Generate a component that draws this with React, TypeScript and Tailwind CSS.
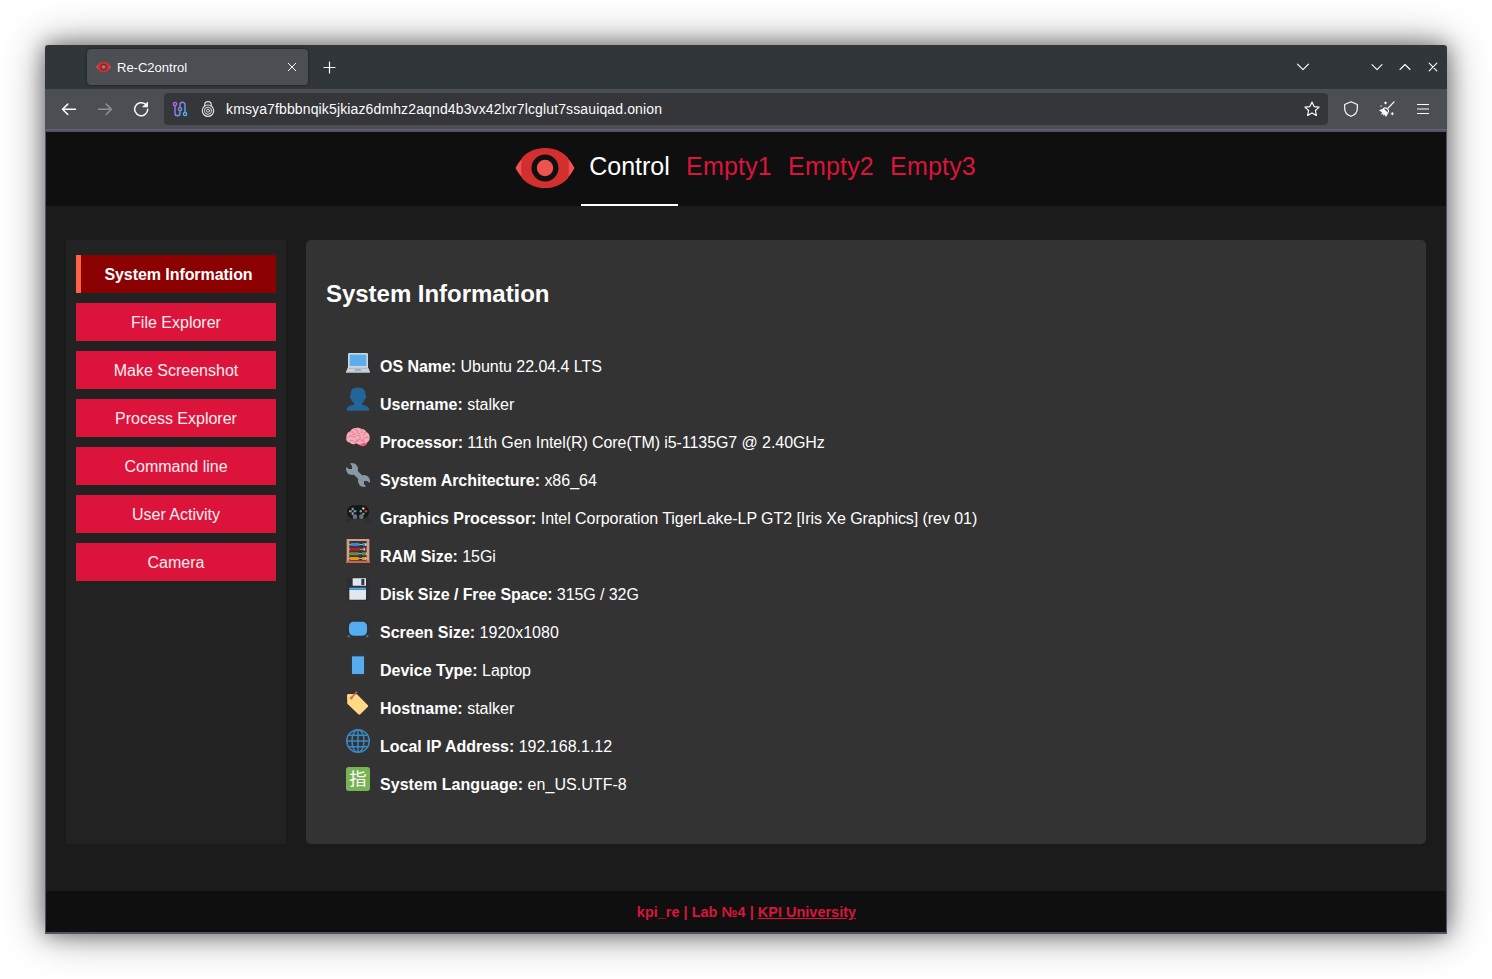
import React from "react";

type IconProps = { children: React.ReactNode; className?: string; size?: number };

function Line({ children, className = "", size = 16 }: IconProps) {
  return (
    <svg
      width={size}
      height={size}
      viewBox={`0 0 ${size} ${size}`}
      fill="none"
      stroke="currentColor"
      strokeWidth="1.2"
      strokeLinecap="round"
      strokeLinejoin="round"
      className={`shrink-0 ${className}`}
    >
      {children}
    </svg>
  );
}

function Eye({ width, height, ring = "#101010" }: { width: number; height: number; ring?: string }) {
  return (
    <svg width={width} height={height} viewBox="0 0 60 40" className="shrink-0">
      <path fill="#ef5350" d="M.5 20C7 7.500 17 1 30 1s23 6.500 29.500 19C53 32.500 43 39 30 39S7 32.500.5 20Z" />
      <path fill="#d32f2f" d="M7 9.800C13 3.500 20 0 30 0s17 3.500 23 9.800c1.300 6.500 1.300 13.900 0 20.400C47 36.500 40 40 30 40S13 36.500 7 30.200c-1.300-6.500-1.300-13.900 0-20.400Z" />
      <circle cx="30" cy="20" r="13.500" fill={ring} />
      <circle cx="30" cy="20" r="8.200" fill="#ef5350" />
    </svg>
  );
}

const glyphs: Record<string, React.ReactNode> = {
  laptop: (
    <>
      <path fill="#ccd6dd" d="M5 6h26a2 2 0 0 1 2 2v19.500l3 6.500a1.500 1.500 0 0 1-1.500 2h-33A1.500 1.500 0 0 1 0 34l3-6.500V8a2 2 0 0 1 2-2Z" />
      <path fill="#9aaab4" d="M0 34h36a1.500 1.500 0 0 1-1.500 2h-33A1.500 1.500 0 0 1 0 34Z" />
      <path fill="#5dadec" d="M5.500 8.500h25v17h-25z" />
      <path fill="#aebbc1" d="M4.500 28h27l1.200 2.500H3.300z" />
      <path fill="#9aaab4" d="M14 30.500h8l1 2.500H13z" />
    </>
  ),
  user: (
    <path fill="#226699" d="M24 26.800v-2.600c2.200-1.600 4-4 4.700-6.800.8 0 1.700-1.300 1.700-3 0-1.500-.5-2.600-1.300-2.900C29.700 5 25.800.8 18 .8S6.300 5 6.900 11.500c-.8.300-1.300 1.400-1.300 2.900 0 1.700.9 3 1.700 3 .7 2.800 2.500 5.200 4.700 6.800v2.600C5 28 1 30 1 35.500h34c0-5.500-4-7.500-11-8.700Z" />
  ),
  brain: (
    <g transform="translate(0 1.500)">
      <path fill="#ea596e" d="M18 23c5-2 11-2 14 2-1 4-5 6-9 5-3 0-5-3-5-7Z" />
      <path fill="#f4abba" d="M35.500 17c0-4-2-7-5-8-1-3-4-5-8-5-2-1-5-2-8-1-4 0-7 2-8 5-4 1-6 5-6 9-1 5 2 8 6 8 2 3 6 3 9 1 3 3 8 2 10-1 3 1 7 1 8-2 2-1 2-4 2-6Z" />
      <g fill="none" stroke="#dd6f86" strokeWidth="1.200" strokeLinecap="round">
        <path d="M7 9c2-1 4 0 5 2M13 5c3 0 4 2 4 4s2 3 4 2M22 5c3 1 3 3 2 5M30 10c-3 0-4 2-4 4M3 17c2-3 5-3 7-1s4 1 5-1M18 14c3 0 4 2 3 5s-4 3-6 2M33 17c-2-1-5 0-6 2s-3 3-5 2M6 22c2-1 4-1 5 1M13 25c1-2 3-3 5-2M28 23c-1-1-3-1-4 0M10 13c2-1 4-1 5 0" />
      </g>
    </g>
  ),
  wrench: (
    <>
      <path stroke="#8899a6" strokeWidth="8" d="m10 10 16 16" />
      <circle cx="9" cy="9" r="9" fill="#8899a6" />
      <circle cx="27" cy="27" r="9" fill="#8899a6" />
      <path fill="#333" d="M-2-2h7.500v2L9 4.500V9H4.500L0 5.500h-2zM38 38h-7.500v-2L27 31.500V27h4.500l4.500 3.500h2z" />
    </>
  ),
  gamepad: (
    <g transform="translate(0 5.500)">
      <path fill="#292f33" d="M4 15 0 25c0 2 2 3 4 1l8-4h12l8 4c2 2 4 1 4-1l-4-10Z" />
      <rect x="1.500" y="1" width="33" height="19.500" rx="9.500" fill="#141719" />
      <path fill="#8899a6" d="M8.500 4.500h3v4h-3zM8.500 11.500h3v4h-3zM4.500 8.500h4v3h-4zM11.500 8.500h4v3h-4z" />
      <circle cx="13.500" cy="18" r="3.500" fill="#66757f" />
      <circle cx="23" cy="18" r="3.500" fill="#66757f" />
      <circle cx="26" cy="5.800" r="1.800" fill="#ffcc4d" />
      <circle cx="22.200" cy="9.800" r="1.800" fill="#55acee" />
      <circle cx="29.800" cy="9.800" r="1.800" fill="#dd2e44" />
      <circle cx="26" cy="13.800" r="1.800" fill="#77b255" />
    </g>
  ),
  abacus: (
    <>
      <path fill="#31373d" d="M3 3h30v29H3z" />
      <path fill="#a9b5bd" d="M4 7.500h28v1.500H4zM4 14.500h28V16H4zM4 21.500h28V23H4zM4 28.500h28V30H4z" />
      <path fill="#3b88c3" d="M7 6h13v4.500H7zM25 6h4v4.500h-4z" />
      <path fill="#be1931" d="M6 13h15v4.500H6zM28 13h3v4.500h-3z" />
      <path fill="#5c913b" d="M6 20h13v4.500H6zM24 20h6v4.500h-6z" />
      <path fill="#f4900c" d="M6 27h13v4.500H6zM24 27h5v4.500h-5z" />
      <path fill="#e6e7e8" d="M29 6h1.500v4.500H29zM26.500 13H28v4.500h-1.500zM30 20h1v4.500h-1zM29 27h1.500v4.500H29z" />
      <path fill="#d99e82" d="M1 0h4v35H1zM31 0h4v35h-4zM1 0h34v3H1z" />
      <path fill="#c1694f" d="M0 32.500h36V36H0z" />
    </>
  ),
  floppy: (
    <>
      <path fill="#292f33" d="M4 1h25l6 5v28a2 2 0 0 1-2 2H4a2 2 0 0 1-2-2V3a2 2 0 0 1 2-2Z" />
      <path fill="#e1e8ed" d="M10 2h20v11H10zM5 19h25v14a1 1 0 0 1-1 1H6a1 1 0 0 1-1-1z" />
      <path fill="#31373d" d="M23 3h4.500v9H23z" />
      <path fill="#55acee" d="M5 16h25v3H5z" />
    </>
  ),
  screen: (
    <g transform="translate(0 1)">
      <path fill="none" stroke="#292f33" strokeWidth="1.200" d="m11 2 7 6 7-6" />
      <rect x="1" y="7" width="34" height="25" rx="4" fill="#2d3237" />
      <rect x="4.500" y="9" width="27" height="21" rx="7" fill="#55acee" />
      <path fill="#66757f" d="M2.500 29.500h3v3h-3zM30.500 29.500h3v3h-3z" />
    </g>
  ),
  phone: (
    <>
      <rect x="7" y="0" width="22" height="36" rx="3" fill="#31373d" />
      <path fill="#55acee" d="M9 5h18v26.500H9z" />
    </>
  ),
  tag: (
    <>
      <path fill="#ffd983" d="M1.500 7c0-1.500 1-2.500 2.500-2.500L16.500 5l16 16c1 1 1 2 0 3L21.500 35c-1 1-2 1-3 0L2 19Z" />
      <circle cx="8" cy="10.500" r="2.500" fill="#d99e82" />
      <path stroke="#c1694f" strokeWidth="2.200" strokeLinecap="round" fill="none" d="M7.500 11 16 1.500" />
    </>
  ),
  globe: (
    <g fill="none" stroke="#3b88c3" strokeWidth="2.200">
      <circle cx="18" cy="18" r="16.900" />
      <ellipse cx="18" cy="18" rx="9" ry="17" />
      <path d="M18 1v34M1 18h34M4 9.500h28M4 26.500h28" />
    </g>
  ),
  language: (
    <>
      <rect width="36" height="36" rx="4" fill="#77b255" />
      <text x="18" y="27.500" textAnchor="middle" fontSize="26" fill="#fff" fontFamily="Noto Sans CJK JP, sans-serif">指</text>
    </>
  ),
};

const facts = [
  { icon: "laptop", label: "OS Name:", value: "Ubuntu 22.04.4 LTS", tracking: "tracking-[-0.04px]" },
  { icon: "user", label: "Username:", value: "stalker", tracking: "" },
  { icon: "brain", label: "Processor:", value: "11th Gen Intel(R) Core(TM) i5-1135G7 @ 2.40GHz", tracking: "tracking-[-0.07px]" },
  { icon: "wrench", label: "System Architecture:", value: "x86_64", tracking: "tracking-[-0.02px]" },
  { icon: "gamepad", label: "Graphics Processor:", value: "Intel Corporation TigerLake-LP GT2 [Iris Xe Graphics] (rev 01)", tracking: "tracking-[-0.055px]" },
  { icon: "abacus", label: "RAM Size:", value: "15Gi", tracking: "tracking-[-0.05px]" },
  { icon: "floppy", label: "Disk Size / Free Space:", value: "315G / 32G", tracking: "tracking-[-0.08px]" },
  { icon: "screen", label: "Screen Size:", value: "1920x1080", tracking: "" },
  { icon: "phone", label: "Device Type:", value: "Laptop", tracking: "" },
  { icon: "tag", label: "Hostname:", value: "stalker", tracking: "" },
  { icon: "globe", label: "Local IP Address:", value: "192.168.1.12", tracking: "" },
  { icon: "language", label: "System Language:", value: "en_US.UTF-8", tracking: "tracking-[0.05px]" },
];

const menu = ["File Explorer", "Make Screenshot", "Process Explorer", "Command line", "User Activity", "Camera"];

function TitleBar() {
  return (
    <div className="flex h-11 items-center bg-[#31363b] pl-[42px] text-[#fcfcfc]">
      <div className="flex h-9 w-[221px] items-center rounded bg-[#4b4e53] pr-[10px] pl-[9px] shadow-[0_0_3px_rgba(0,0,0,0.5)]">
        <Eye width={15} height={10} ring="#4a3a3f" />
        <span className="ml-[6px] grow pt-px text-[13px]">Re-C2ontrol</span>
        <Line size={12}>
          <path strokeWidth="1" d="m2.200 2.200 7.600 7.600m0-7.600-7.600 7.600" />
        </Line>
      </div>
      <Line className="ml-[13px]">
        <path d="M8.500 3v11M3 8.500h11" />
      </Line>
      <div className="ml-auto flex items-center pr-[6px]">
        <Line className="mr-[58px]">
          <path d="m2.500 5.200 5.500 5.500 5.500-5.500" />
        </Line>
        <Line className="mr-3">
          <path strokeWidth="1.100" d="m3 5.700 5 5 5-5" />
        </Line>
        <Line className="mr-3">
          <path strokeWidth="1.100" d="m3 10.500 5-5 5 5" />
        </Line>
        <Line>
          <path strokeWidth="1.100" d="m4.200 4.200 7.600 7.600m0-7.600-7.600 7.600" />
        </Line>
      </div>
    </div>
  );
}

function AddressBar() {
  return (
    <div className="flex h-10 items-center bg-[#4b4e53] pr-4 pl-4 text-[#fcfcfc]">
      <Line>
        <path strokeWidth="1.500" d="M14.500 8.300h-13M6.800 3.100 1.500 8.300l5.300 5.200" />
      </Line>
      <Line className="ml-5 text-[#8d9093]">
        <path strokeWidth="1.500" d="M1.500 8.300h13M9.200 3.100l5.300 5.200-5.300 5.200" />
      </Line>
      <Line className="ml-5">
        <path strokeWidth="1.500" d="M14.700 8.300a6.500 6.500 0 1 1-2.200-5" />
        <path fill="currentColor" strokeWidth="1" d="M14.500 1.500v4.300h-4.300z" />
      </Line>
      <div className="ml-[15px] flex h-8 w-[1164px] items-center rounded bg-[#35363a] pr-2 pl-2">
        <svg width="16" height="16" viewBox="0 0 16 16" fill="none" strokeWidth="1.400" className="shrink-0">
          <defs>
            <linearGradient id="circuit" x1="0" y1="2" x2="15" y2="13" gradientUnits="userSpaceOnUse">
              <stop offset="0" stopColor="#cf62e6" />
              <stop offset="0.5" stopColor="#7d84f2" />
              <stop offset="1" stopColor="#3fc4f2" />
            </linearGradient>
          </defs>
          <g stroke="url(#circuit)">
            <circle cx="3" cy="3" r="1.600" />
            <circle cx="8" cy="8" r="1.600" />
            <circle cx="13" cy="13" r="1.600" />
            <path d="M3 4.600V12.200a2.500 2.500 0 0 0 5 0V9.600M8 6.400V3.800a2.500 2.500 0 0 1 5 0v7.600" />
          </g>
        </svg>
        <Line className="ml-3 text-[#dedfe0]">
          <circle cx="8" cy="9.700" r="5.700" />
          <circle cx="8" cy="9.700" r="3.600" strokeWidth="1" />
          <circle cx="8" cy="9.700" r="1.500" strokeWidth="1" />
          <path d="M4.700 5V3.900a3.300 3.300 0 0 1 6.600 0V5" />
        </Line>
        <span className="ml-[10px] grow text-[14px] tracking-[0.13px]">kmsya7fbbbnqik5jkiaz6dmhz2aqnd4b3vx42lxr7lcglut7ssauiqad.onion</span>
        <Line>
          <path d="m8 1 2.100 4.600 5 .5-3.700 3.400 1 5L8 12l-4.400 2.500 1-5L.9 6.100l5-.5z" />
        </Line>
      </div>
      <Line className="ml-[15px]">
        <path d="M8 .8 14.300 3.500v4.200c0 3.800-2.600 6.300-6.300 7.600-3.700-1.300-6.300-3.800-6.300-7.600V3.500z" />
      </Line>
      <Line className="ml-5">
        <path d="M15 .8 9.200 7" />
        <path d="M4.500 7.500c2-1.500 5.500.500 5 3.500" />
        <path fill="currentColor" strokeWidth="0.600" d="M.8 9.300 4.500 7.800 9 12l-2 3.500-1.500-2-1 .7.100-1.700-2.100.7.800-1.800z" />
        <path strokeWidth="1.100" d="M6.500 1v1.800M5.600 1.900h1.800M1.800 5h.6M13.300 11.600v2.200M12.200 12.700h2.200" />
      </Line>
      <Line className="ml-5">
        <path strokeWidth="1.200" strokeLinecap="butt" d="M2 3.500h12M2 8h12M2 12.500h12" />
      </Line>
    </div>
  );
}

export default function App() {
  return (
    <div className="h-[979px] w-[1492px] overflow-hidden bg-white p-[45px] font-['Liberation_Sans',Arial,sans-serif]">
      <div className="flex h-[889px] w-[1402px] flex-col rounded-t-[3px] shadow-[0_0_20px_rgba(0,0,0,0.4),0_0_42px_rgba(0,0,0,0.45)]">
        <div className="overflow-hidden rounded-t-[3px]">
          <TitleBar />
          <AddressBar />
          <div className="h-px bg-[#62646c]" />
          <div className="h-[2px] bg-[#55516a]" />
        </div>
        <div className="flex grow flex-col border-x border-b-2 border-[#55516a] border-t-0 bg-[#1b1b1b] text-white">
          <header className="flex h-[74px] bg-[#0f0f0f] pl-[469px] text-[25px]">
            <div className="pt-4">
              <Eye width={60} height={40} />
            </div>
            <nav className="ml-[6px] flex leading-[68px]">
              <a className="h-[74px] w-[97px] border-b-2 border-white text-center">Control</a>
              {["Empty1", "Empty2", "Empty3"].map((name) => (
                <a key={name} className="w-[102px] text-center tracking-[0.2px] text-[#dc143c]">{name}</a>
              ))}
            </nav>
          </header>
          <main className="flex grow gap-5 px-5 pt-[34px] pb-[47px]">
            <aside className="flex w-[220px] flex-col gap-[10px] bg-[#222] px-[10px] pt-[15px] text-center text-[16px] leading-[40px]">
              <a className="h-[38px] border-l-[5px] border-[#ff6347] bg-[#8b0000] font-bold tracking-[-0.07px]">System Information</a>
              {menu.map((item) => (
                <a key={item} className="h-[38px] bg-[#dc143c] text-[#ffeef1]">{item}</a>
              ))}
            </aside>
            <section className="grow rounded-[5px] bg-[#333] px-5 pt-10">
              <h1 className="text-[24px] leading-[28px] font-bold tracking-[-0.03px]">System Information</h1>
              <ul className="mt-[41px] px-5">
                {facts.map((fact) => (
                  <li key={fact.label} className="flex h-[38px] items-start">
                    <svg width="24" height="24" viewBox="0 0 36 36" className="shrink-0 overflow-visible">{glyphs[fact.icon]}</svg>
                    <p className={`mt-[6px] ml-[10px] text-[16px] leading-6 ${fact.tracking}`}>
                      <strong>{fact.label}</strong> {fact.value}
                    </p>
                  </li>
                ))}
              </ul>
            </section>
          </main>
          <footer className="h-[41px] bg-[#0f0f0f] pl-px text-center text-[14.4px] leading-[42px] font-bold tracking-[0.05px] text-[#dc143c]">
            kpi_re | Lab №4 | <a className="underline">KPI University</a>
          </footer>
        </div>
      </div>
    </div>
  );
}
